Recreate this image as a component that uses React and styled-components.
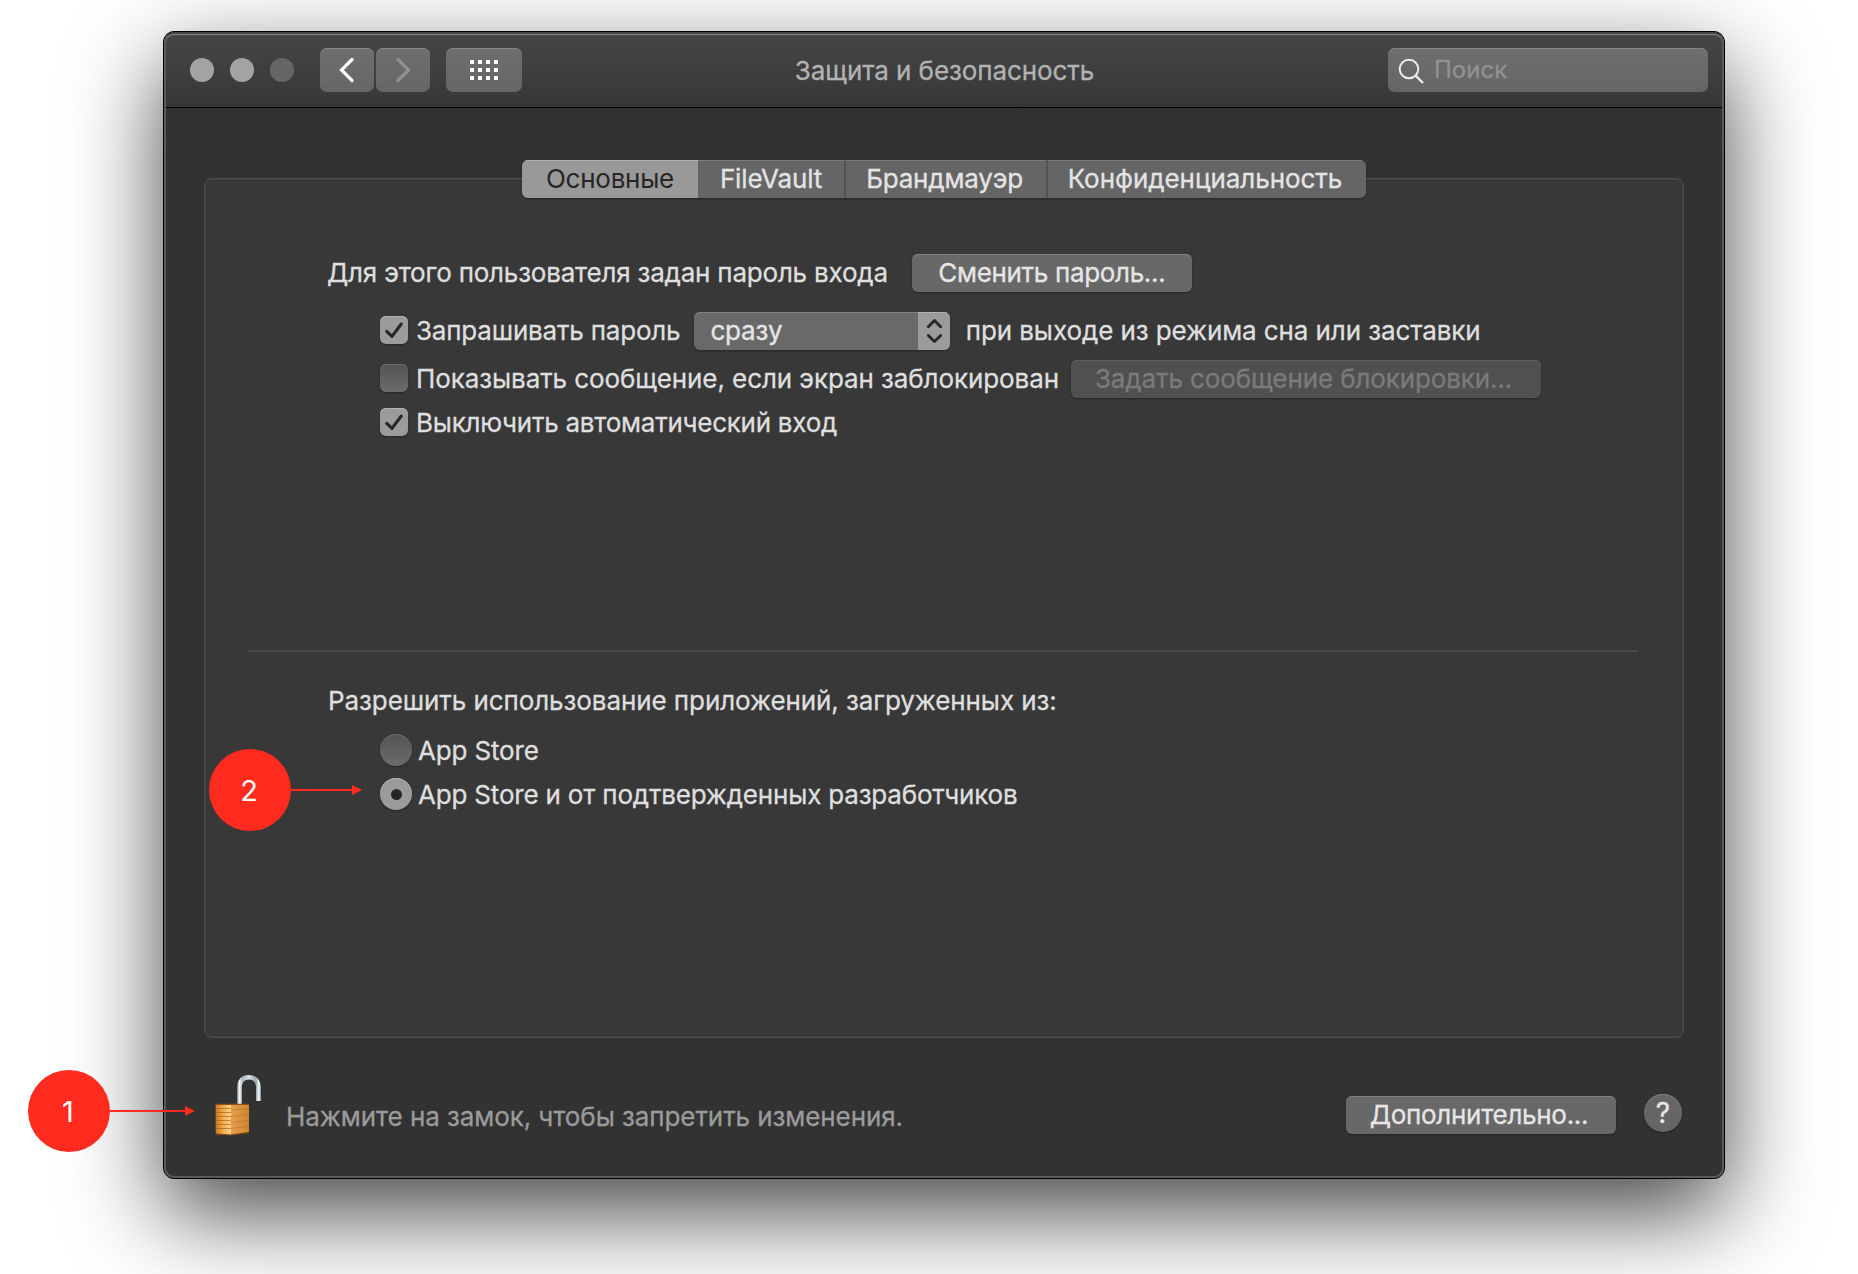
import React from "react";
import styled, { createGlobalStyle, css } from "styled-components";

const GlobalStyle = createGlobalStyle`
  *, *::before, *::after { box-sizing: border-box; }
  body { margin: 0; background: #fff; }
`;

const Stage = styled.main`
  position: relative;
  width: 1858px;
  height: 1274px;
  padding: 31px 132px 95px 163px;
  overflow: hidden;
  background: #fff;
  font-family: Inter, "Liberation Sans", sans-serif;
  font-size: 26px;
  line-height: 38px;
  color: #dfdfdf;
`;

const Window = styled.section`
  position: relative;
  display: flex;
  flex-direction: column;
  width: 1562px;
  height: 1148px;
  border: 1px solid #000;
  border-radius: 11px;
  background: #323232;
  box-shadow: 0 34px 92px rgba(0, 0, 0, 0.73);
  -webkit-text-stroke: 0.3px currentColor;

  &::after {
    content: "";
    position: absolute;
    inset: 0;
    border: 2px solid #5b5b5b;
    border-top-color: transparent;
    border-radius: 10px;
    box-shadow: inset 0 1px 0 #858585;
    pointer-events: none;
  }
`;

const TitleBar = styled.header`
  display: grid;
  grid-template-columns: 1fr auto 1fr;
  align-items: center;
  height: 76px;
  padding: 0 16px 0 26px;
  border-bottom: 1px solid #000;
  border-radius: 10px 10px 0 0;
  background: linear-gradient(#464646, #373737);
`;

const Controls = styled.div`
  display: flex;
  align-items: center;
`;

const Lights = styled.div`
  display: flex;
  gap: 16px;
  margin-right: 26px;
`;

const Light = styled.span`
  width: 24px;
  height: 24px;
  border-radius: 50%;
  background: ${(p) => (p.$dim ? "#666" : "#a3a3a3")};
`;

const ToolButton = styled.button`
  display: flex;
  align-items: center;
  justify-content: center;
  width: ${(p) => p.$width}px;
  height: 44px;
  margin: 0 ${(p) => p.$after || 0}px 0 0;
  padding: 0;
  border: 0;
  border-radius: 7px;
  background: linear-gradient(#6e6e6e, #666);
  box-shadow: inset 0 1px 0 #858585;
`;

const DotGrid = styled.span`
  display: grid;
  grid-template-columns: repeat(4, 4px);
  grid-auto-rows: 4px;
  gap: 4px;
`;

const Dot = styled.i`
  background: #fff;
`;

const Label = styled.span`
  padding-top: ${(p) => p.$drop || 0}px;
  white-space: nowrap;
  letter-spacing: ${(p) => p.$track || 0}px;
`;

const Title = styled(Label).attrs({ as: "h1" })`
  margin: 2px 9px 0 0;
  font-size: 26px;
  font-weight: 400;
  color: #b2b2b2;
`;

const Search = styled.div`
  display: flex;
  align-items: center;
  justify-self: end;
  gap: 8px;
  width: 320px;
  height: 44px;
  padding-left: 10px;
  border-radius: 7px;
  background: linear-gradient(#6e6e6e, #666);
  box-shadow: inset 0 1px 0 #858585;
  font-size: 24px;
  color: #929292;
`;

const Body = styled.div`
  display: flex;
  flex-direction: column;
  flex: 1;
  padding: 52px 40px 0;
`;

const Tabs = styled.nav`
  position: relative;
  z-index: 1;
  display: flex;
  align-self: center;
  width: 844px;
  height: 38px;
  margin-bottom: -20px;
  border-radius: 6px;
  overflow: hidden;
  box-shadow: 0 1px 2px rgba(0, 0, 0, 0.35);
`;

const Tab = styled.button`
  width: ${(p) => p.$width}px;
  padding: 0 ${(p) => p.$nudge || 0}px 0 0;
  border: 0;
  border-left: ${(p) => (p.$divided ? "2px solid #545454" : "0")};
  background: ${(p) => (p.$active ? "#999" : "#656565")};
  box-shadow: inset 0 1px 0 ${(p) => (p.$active ? "#b0b0b0" : "#7f7f7f")};
  font: inherit;
  letter-spacing: ${(p) => p.$track}px;
  white-space: nowrap;
  color: ${(p) => (p.$active ? "#262626" : "#e4e4e4")};
  -webkit-text-stroke-width: ${(p) => (p.$active ? "0" : "0.3px")};
`;

const Panel = styled.div`
  display: flex;
  flex-direction: column;
  height: 860px;
  padding: 75px 44px 0;
  border: 1px solid #4c4c4c;
  border-radius: 8px;
  background: #383838;
  box-shadow: inset 0 0 0 1px #404040;
`;

const Group = styled.div`
  display: flex;
  flex-direction: column;
  padding-left: ${(p) => p.$inset || 78}px;
`;

const Row = styled.div`
  display: flex;
  align-items: center;
  height: 38px;
  margin-top: ${(p) => p.$above || 0}px;
  padding-left: ${(p) => p.$indent || 0}px;
`;

const Check = styled.span`
  display: flex;
  align-items: center;
  justify-content: center;
  width: 28px;
  height: 28px;
  margin: 0 8px 2px 0;
  border-radius: 6px;
  ${(p) =>
    p.$on
      ? css`
          background: #9b9b9b;
          box-shadow: inset 0 1px 0 #b4b4b4, 0 1px 2px rgba(0, 0, 0, 0.35);
        `
      : css`
          background: linear-gradient(#545454, #6b6b6b);
          box-shadow: inset 0 1px 0 #6e6e6e, 0 1px 2px rgba(0, 0, 0, 0.35);
        `}
`;

const Radio = styled(Check)`
  width: 32px;
  height: 32px;
  margin: 0 6px 0 0;
  border-radius: 50%;
`;

const RadioDot = styled.i`
  width: 11px;
  height: 11px;
  border-radius: 50%;
  background: #262626;
`;

const PushButton = styled.button`
  width: ${(p) => p.$width}px;
  height: 38px;
  margin: 0 0 0 ${(p) => p.$before || 0}px;
  padding: 0 ${(p) => p.$nudge || 0}px 0 0;
  border: 0;
  border-radius: 6px;
  background: ${(p) => (p.$muted ? "#505050" : "#686868")};
  box-shadow: inset 0 1px 0 ${(p) => (p.$muted ? "#5f5f5f" : "#828282")}, 0 1px 2px rgba(0, 0, 0, 0.35);
  font: inherit;
  letter-spacing: ${(p) => p.$track}px;
  white-space: nowrap;
  color: ${(p) => (p.$muted ? "#7b7b7b" : "#e6e6e6")};
`;

const Select = styled.div`
  display: flex;
  justify-content: space-between;
  width: 256px;
  height: 38px;
  margin: 0 15.4px 0 14px;
  padding-left: 16px;
  border-radius: 6px;
  overflow: hidden;
  background: #696969;
  box-shadow: inset 0 1px 0 #828282, 0 1px 2px rgba(0, 0, 0, 0.35);
  color: #e6e6e6;
`;

const Stepper = styled.span`
  display: flex;
  align-items: center;
  justify-content: center;
  width: 32px;
  background: #9b9b9b;
  box-shadow: inset 0 1px 0 #b4b4b4;
`;

const Divider = styled.hr`
  width: 1389px;
  height: 2px;
  margin: 208px 0 30px;
  border: 0;
  background: #494949;
`;

const Footer = styled.footer`
  display: flex;
  align-items: center;
  height: 64px;
  margin-top: 36px;
  padding: 0 2px 0 10px;
`;

const Hint = styled(Label)`
  margin: 21px auto 0 24px;
  color: #9b9b9b;
`;

const FooterActions = styled.div`
  display: flex;
  gap: 28px;
  align-items: center;
  margin-top: 18px;
`;

const Help = styled.button`
  width: 38px;
  height: 38px;
  margin: 0 0 4px;
  padding: 0;
  border: 0;
  border-radius: 50%;
  background: #666;
  box-shadow: inset 0 1px 0 #808080, 0 1px 2px rgba(0, 0, 0, 0.35);
  font: inherit;
  font-size: 28px;
  color: #e6e6e6;
`;

const Marker = styled.div`
  position: absolute;
  left: ${(p) => p.$x}px;
  top: ${(p) => p.$y}px;
  display: flex;
  align-items: center;
`;

const Badge = styled.b`
  display: flex;
  align-items: center;
  justify-content: center;
  width: 82px;
  height: 82px;
  padding: 1px 2px 0 0;
  border-radius: 50%;
  background: #fe2b1e;
  font-size: 29px;
  font-weight: 400;
  color: #fff;
`;

const Shaft = styled.i`
  width: ${(p) => p.$length}px;
  height: 2px;
  background: #fe2b1e;
`;

const Tip = styled.i`
  border: 5px solid transparent;
  border-left: 10px solid #fe2b1e;
  border-right: 0;
`;

const Tick = () => (
  <svg width="28" height="28" viewBox="0 0 28 28" fill="none">
    <path d="M6.7 15.3 12 20.4 21.3 8" stroke="#262626" strokeWidth="3" strokeLinecap="round" strokeLinejoin="round" />
  </svg>
);

const Chevron = ({ flip, color }) => (
  <svg width="54" height="44" viewBox="0 0 54 44" fill="none">
    <path d={flip ? "M22 11.5 32.5 22 22 32.5" : "M32 11.5 21.5 22 32 32.5"} stroke={color} strokeWidth="3.2" strokeLinecap="round" />
  </svg>
);

const Padlock = () => (
  <svg width="48" height="64" viewBox="0 0 48 64">
    <defs>
      <linearGradient id="steel" x1="0" x2="1" y1="0" y2="0">
        <stop offset="0" stopColor="#8fa0a8" />
        <stop offset=".1" stopColor="#f4f9fb" />
        <stop offset=".22" stopColor="#a5b5be" />
        <stop offset=".5" stopColor="#d5e0e6" />
        <stop offset=".8" stopColor="#96a6af" />
        <stop offset=".92" stopColor="#f8fcfd" />
        <stop offset="1" stopColor="#a2b0b8" />
      </linearGradient>
      <linearGradient id="front" x1="0" x2="1" y1="0" y2="0">
        <stop offset="0" stopColor="#c9791f" />
        <stop offset=".45" stopColor="#f0a648" />
        <stop offset="1" stopColor="#ffd590" />
      </linearGradient>
      <linearGradient id="side" x1="0" x2="1" y1="0" y2="0">
        <stop offset="0" stopColor="#e9a050" />
        <stop offset="1" stopColor="#cf8630" />
      </linearGradient>
    </defs>
    <path d="M23.2 31V13C23.2 5.7 27.8 1 34.8 1S46.8 5.7 46.8 13V27H42V13.5C42 8.3 39.3 5.4 35 5.4S27.8 8.3 27.8 13.5V31Z" fill="url(#steel)" />
    <path d="M1.7 30H17V61L3 60.5Q1.7 60.3 1.7 59Z" fill="url(#front)" />
    <path d="M17 30H35V57.5Q35 58.6 34 58.8L17 61Z" fill="url(#side)" />
    <g stroke="#9a5712" strokeWidth="1" opacity=".6">
      <path d="M1.7 34.5H17M1.7 38.5H17M1.7 42.5H17M1.7 46.5H17M1.7 50.5H17M1.7 54.5H17" />
    </g>
    <g stroke="#b56a1d" strokeWidth="1" opacity=".5">
      <path d="M17 36 35 34.5M17 42.5 35 40.5M17 48.5 35 46.5M17 54.5 35 52" />
    </g>
    <path d="M1.7 30.4H35" stroke="#8f5114" strokeWidth="1.2" />
    <path d="M2 60.2 17 61 34.7 58.6" stroke="#7a3f08" strokeWidth="1.2" fill="none" />
  </svg>
);

export default function App() {
  return (
    <Stage>
      <GlobalStyle />
      <Window>
        <TitleBar>
          <Controls>
            <Lights>
              <Light />
              <Light />
              <Light $dim />
            </Lights>
            <ToolButton $width={54} $after={2}>
              <Chevron color="#fff" />
            </ToolButton>
            <ToolButton $width={54} $after={16}>
              <Chevron flip color="#909090" />
            </ToolButton>
            <ToolButton $width={76}>
              <DotGrid>
                {Array.from({ length: 12 }, (_, i) => (
                  <Dot key={i} />
                ))}
              </DotGrid>
            </ToolButton>
          </Controls>
          <Title $track={-0.08}>Защита и безопасность</Title>
          <Search>
            <svg width="28" height="28" viewBox="0 0 28 28" fill="none" stroke="#ececec" strokeWidth="2">
              <circle cx="11" cy="13" r="9.3" />
              <path d="M17.7 19.7 25 27" strokeWidth="2.4" />
            </svg>
            <Label>Поиск</Label>
          </Search>
        </TitleBar>
        <Body>
          <Tabs>
            <Tab $width={176} $active $track={-0.25}>Основные</Tab>
            <Tab $width={146} $track={-0.15}>FileVault</Tab>
            <Tab $width={202} $divided $nudge={3} $track={-0.2}>Брандмауэр</Tab>
            <Tab $width={320} $divided $nudge={4} $track={-0.05}>Конфиденциальность</Tab>
          </Tabs>
          <Panel>
            <Group>
              <Row>
                <Label $track={-0.21}>Для этого пользователя задан пароль входа</Label>
                <PushButton $width={280} $before={24} $track={-0.33}>Сменить пароль...</PushButton>
              </Row>
              <Row $indent={53} $above={20}>
                <Check $on><Tick /></Check>
                <Label $track={-0.2}>Запрашивать пароль</Label>
                <Select>
                  <Label $track={-0.15}>сразу</Label>
                  <Stepper>
                    <svg width="32" height="38" viewBox="0 0 32 38" fill="none" stroke="#262626" strokeWidth="2.8" strokeLinecap="round" strokeLinejoin="round">
                      <path d="M10.3 14.8 16.5 8.6 22.7 14.8M10.3 23.4 16.5 29.6 22.7 23.4" />
                    </svg>
                  </Stepper>
                </Select>
                <Label $track={-0.1}>при выходе из режима сна или заставки</Label>
              </Row>
              <Row $indent={53} $above={10}>
                <Check />
                <Label $track={-0.09}>Показывать сообщение, если экран заблокирован</Label>
                <PushButton $width={470} $before={11.6} $nudge={4} $muted $track={-0.12}>Задать сообщение блокировки...</PushButton>
              </Row>
              <Row $indent={53} $above={6}>
                <Check $on><Tick /></Check>
                <Label $track={-0.26}>Выключить автоматический вход</Label>
              </Row>
            </Group>
            <Divider />
            <Group $inset={79}>
              <Row>
                <Label $track={-0.08}>Разрешить использование приложений, загруженных из:</Label>
              </Row>
              <Row $indent={52} $above={11}>
                <Radio />
                <Label $drop={2} $track={-0.15}>App Store</Label>
              </Row>
              <Row $indent={52} $above={6}>
                <Radio $on><RadioDot /></Radio>
                <Label $drop={2} $track={-0.19}>App Store и от подтвержденных разработчиков</Label>
              </Row>
            </Group>
          </Panel>
          <Footer>
            <Padlock />
            <Hint $track={-0.08}>Нажмите на замок, чтобы запретить изменения.</Hint>
            <FooterActions>
              <PushButton $width={270} $nudge={4} $track={-0.3}>Дополнительно...</PushButton>
              <Help>?</Help>
            </FooterActions>
          </Footer>
        </Body>
      </Window>
      <Marker $x={209} $y={749}>
        <Badge>2</Badge>
        <Shaft $length={61} />
        <Tip />
      </Marker>
      <Marker $x={28} $y={1070}>
        <Badge>1</Badge>
        <Shaft $length={75} />
        <Tip />
      </Marker>
    </Stage>
  );
}
